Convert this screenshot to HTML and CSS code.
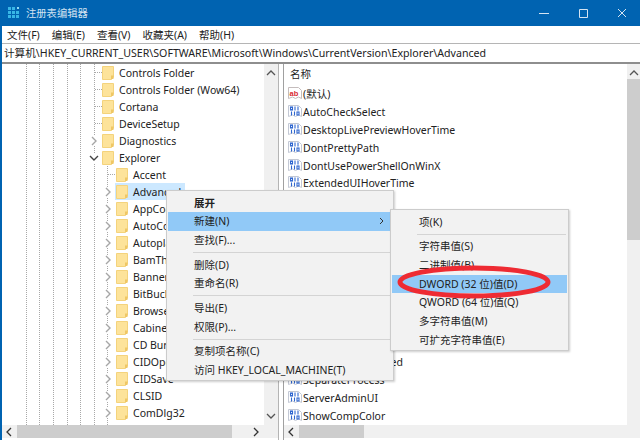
FILE: index.html
```html
<!DOCTYPE html>
<html lang="zh-CN">
<head>
    <meta charset="UTF-8">
    <title>注册表编辑器</title>
    <link rel="stylesheet" href="styles.css">
</head>
<body>
    <svg class="defs" width="0" height="0">
        <symbol id="folder" viewBox="0 0 12 14">
            <path d="M.5.5h11v10.5l-2 2.5h-9z" fill="#fde39a" stroke="#f4d37c"/>
            <path d="M9 9.500h2.500v3.500h-2.500z" fill="#efc765"/>
        </symbol>
        <symbol id="chev-r" viewBox="0 0 10 10"><path d="M3 1l4 4-4 4" fill="none" stroke="#a6a6a6" stroke-width="1.4"/></symbol>
        <symbol id="chev-d" viewBox="0 0 10 10"><path d="M1 3l4 4 4-4" fill="none" stroke="#444" stroke-width="1.4"/></symbol>
        <symbol id="reg-bin" viewBox="0 0 14 14">
            <path d="M.5.5h10l3 3v8l-3-1.500-3 1.500-3-1.500-4 1.500z" fill="#fff" stroke="#c3c8d4"/>
            <g fill="none" stroke="#2f66cf" stroke-width="1.100">
                <rect x="2.500" y="2" width="2" height="3"/><path d="M7 1.500v4"/><path d="M10 1.500v4"/>
                <path d="M3.500 6.500v4"/><path d="M6.500 6.500v4"/><rect x="9" y="7" width="2" height="3"/>
            </g>
        </symbol>
        <symbol id="reg-str" viewBox="0 0 14 14">
            <path d="M.5.5h10l3 3v8l-3-1.500-3 1.500-3-1.500-4 1.500z" fill="#fff" stroke="#c4bcbc"/>
            <text x="1.500" y="8.500" class="reg-ab">ab</text>
        </symbol>
    </svg>

    <header class="titlebar">
        <svg class="app-icon" viewBox="0 0 12 12" width="12" height="12">
            <g fill="#38b6e6">
                <rect x="0" y="0" width="3" height="3"/><rect x="4" y="0" width="3" height="3"/><rect x="9" y="0" width="2" height="2" fill="#8fdcf5"/>
                <rect x="0" y="4" width="3" height="3"/><rect x="4" y="4" width="3" height="3"/><rect x="8" y="4" width="3" height="3"/>
                <rect x="0" y="8" width="3" height="3"/><rect x="4" y="8" width="3" height="3"/><rect x="8" y="8" width="3" height="3"/>
            </g>
        </svg>
        <span class="title">注册表编辑器</span>
        <div class="win-buttons">
            <svg viewBox="0 0 10 10" width="10" height="10"><path d="M0 5.500h10" stroke="#d5e4f2"/></svg>
            <svg viewBox="0 0 10 10" width="10" height="10"><path d="M1.500 1.500h8v8h-8z" fill="none" stroke="#d5e4f2"/></svg>
            <svg viewBox="0 0 10 10" width="10" height="10"><path d="M1 1l8 8M9 1l-8 8" stroke="#d5e4f2"/></svg>
        </div>
    </header>

    <nav class="menubar">
        <span>文件(F)</span>
        <span>编辑(E)</span>
        <span>查看(V)</span>
        <span>收藏夹(A)</span>
        <span>帮助(H)</span>
    </nav>

    <div class="address">计算机\HKEY_CURRENT_USER\SOFTWARE\Microsoft\Windows\CurrentVersion\Explorer\Advanced</div>

    <main class="panes">
        <section class="tree-pane">
            <div class="tree-view">
                <ul class="tree">
                    <li class="lvl1 leaf"><svg class="folder"><use href="#folder"/></svg>Controls Folder</li>
                    <li class="lvl1 leaf"><svg class="folder"><use href="#folder"/></svg>Controls Folder (Wow64)</li>
                    <li class="lvl1 leaf"><svg class="folder"><use href="#folder"/></svg>Cortana</li>
                    <li class="lvl1 leaf"><svg class="folder"><use href="#folder"/></svg>DeviceSetup</li>
                    <li class="lvl1"><svg class="twist"><use href="#chev-r"/></svg><svg class="folder"><use href="#folder"/></svg>Diagnostics</li>
                    <li class="lvl1"><svg class="twist"><use href="#chev-d"/></svg><svg class="folder"><use href="#folder"/></svg>Explorer</li>
                    <li class="lvl2 leaf"><svg class="folder"><use href="#folder"/></svg>Accent</li>
                    <li class="lvl2"><svg class="twist"><use href="#chev-r"/></svg><span class="selected"><svg class="folder"><use href="#folder"/></svg>Advanced</span></li>
                    <li class="lvl2"><svg class="twist"><use href="#chev-r"/></svg><svg class="folder"><use href="#folder"/></svg>AppContainer</li>
                    <li class="lvl2"><svg class="twist"><use href="#chev-r"/></svg><svg class="folder"><use href="#folder"/></svg>AutoComplete</li>
                    <li class="lvl2"><svg class="twist"><use href="#chev-r"/></svg><svg class="folder"><use href="#folder"/></svg>Autoplay</li>
                    <li class="lvl2"><svg class="twist"><use href="#chev-r"/></svg><svg class="folder"><use href="#folder"/></svg>BamThrottling</li>
                    <li class="lvl2"><svg class="twist"><use href="#chev-r"/></svg><svg class="folder"><use href="#folder"/></svg>BannerStore</li>
                    <li class="lvl2"><svg class="twist"><use href="#chev-r"/></svg><svg class="folder"><use href="#folder"/></svg>BitBucket</li>
                    <li class="lvl2"><svg class="twist"><use href="#chev-r"/></svg><svg class="folder"><use href="#folder"/></svg>BrowseNewProcess</li>
                    <li class="lvl2"><svg class="twist"><use href="#chev-r"/></svg><svg class="folder"><use href="#folder"/></svg>CabinetState</li>
                    <li class="lvl2"><svg class="twist"><use href="#chev-r"/></svg><svg class="folder"><use href="#folder"/></svg>CD Burning</li>
                    <li class="lvl2"><svg class="twist"><use href="#chev-r"/></svg><svg class="folder"><use href="#folder"/></svg>CIDOpen</li>
                    <li class="lvl2"><svg class="twist"><use href="#chev-r"/></svg><svg class="folder"><use href="#folder"/></svg>CIDSave</li>
                    <li class="lvl2"><svg class="twist"><use href="#chev-r"/></svg><svg class="folder"><use href="#folder"/></svg>CLSID</li>
                    <li class="lvl2"><svg class="twist"><use href="#chev-r"/></svg><svg class="folder"><use href="#folder"/></svg>ComDlg32</li>
                </ul>
                <div class="vscroll">
                    <svg viewBox="0 0 10 6" width="10" height="6"><path d="M1 5l4-4 4 4" fill="none" stroke="#555" stroke-width="1.300"/></svg>
                    <svg viewBox="0 0 10 6" width="10" height="6"><path d="M1 1l4 4 4-4" fill="none" stroke="#555" stroke-width="1.300"/></svg>
                </div>
            </div>
            <div class="hscroll tree-hscroll">
                <svg viewBox="0 0 6 10" width="6" height="10"><path d="M5 1l-4 4 4 4" fill="none" stroke="#333" stroke-width="1.300"/></svg>
                <div class="hthumb"></div>
                <svg class="hnext" viewBox="0 0 6 10" width="6" height="10"><path d="M1 1l4 4-4 4" fill="none" stroke="#333" stroke-width="1.300"/></svg>
            </div>
        </section>

        <div class="splitter"></div>

        <section class="list-pane">
            <div class="list-view">
                <div class="list">
                    <div class="list-head">名称</div>
                    <div class="value"><svg class="reg"><use href="#reg-str"/></svg>(默认)</div>
                    <div class="value"><svg class="reg"><use href="#reg-bin"/></svg>AutoCheckSelect</div>
                    <div class="value"><svg class="reg"><use href="#reg-bin"/></svg>DesktopLivePreviewHoverTime</div>
                    <div class="value"><svg class="reg"><use href="#reg-bin"/></svg>DontPrettyPath</div>
                    <div class="value"><svg class="reg"><use href="#reg-bin"/></svg>DontUsePowerShellOnWinX</div>
                    <div class="value"><svg class="reg"><use href="#reg-bin"/></svg>ExtendedUIHoverTime</div>
                    <div class="value"><svg class="reg"><use href="#reg-bin"/></svg>Filter</div>
                    <div class="value"><svg class="reg"><use href="#reg-bin"/></svg>Hidden</div>
                    <div class="value"><svg class="reg"><use href="#reg-bin"/></svg>HideFileExt</div>
                    <div class="value"><svg class="reg"><use href="#reg-bin"/></svg>HideIcons</div>
                    <div class="value"><svg class="reg"><use href="#reg-bin"/></svg>IconsOnly</div>
                    <div class="value"><svg class="reg"><use href="#reg-bin"/></svg>ListviewAlphaSelect</div>
                    <div class="value"><svg class="reg"><use href="#reg-bin"/></svg>ListviewShadow</div>
                    <div class="value"><svg class="reg"><use href="#reg-bin"/></svg>MapNetDrvBtn</div>
                    <div class="value"><svg class="reg"><use href="#reg-bin"/></svg>ReindexedProfile</div>
                    <div class="value"><svg class="reg"><use href="#reg-bin"/></svg>RoamedTabletsSeed</div>
                    <div class="value"><svg class="reg"><use href="#reg-bin"/></svg>SeparateProcess</div>
                    <div class="value"><svg class="reg"><use href="#reg-bin"/></svg>ServerAdminUI</div>
                    <div class="value"><svg class="reg"><use href="#reg-bin"/></svg>ShowCompColor</div>
                </div>
                <div class="vscroll list-vscroll">
                    <svg viewBox="0 0 10 6" width="10" height="6"><path d="M1 5l4-4 4 4" fill="none" stroke="#555" stroke-width="1.300"/></svg>
                    <div class="vthumb"></div>
                </div>
            </div>
            <div class="hscroll list-hscroll">
                <svg viewBox="0 0 6 10" width="6" height="10"><path d="M5 1l-4 4 4 4" fill="none" stroke="#333" stroke-width="1.300"/></svg>
                <div class="hthumb"></div>
            </div>
        </section>
    </main>

    <div class="menu context-menu">
        <div class="item bold">展开</div>
        <div class="item active">新建(N)<svg class="arrow" viewBox="0 0 5 8" width="5" height="8"><path d="M1 1l3 3-3 3" fill="none" stroke="#333"/></svg></div>
        <div class="item">查找(F)...</div>
        <div class="sep"></div>
        <div class="item">删除(D)</div>
        <div class="item">重命名(R)</div>
        <div class="sep"></div>
        <div class="item">导出(E)</div>
        <div class="item">权限(P)...</div>
        <div class="sep"></div>
        <div class="item">复制项名称(C)</div>
        <div class="item">访问 HKEY_LOCAL_MACHINE(T)</div>
    </div>

    <div class="menu sub-menu">
        <div class="item">项(K)</div>
        <div class="sep"></div>
        <div class="item">字符串值(S)</div>
        <div class="item">二进制值(B)</div>
        <div class="item active">DWORD (32 位)值(D)</div>
        <div class="item">QWORD (64 位)值(Q)</div>
        <div class="item">多字符串值(M)</div>
        <div class="item">可扩充字符串值(E)</div>
    </div>

    <svg class="ring" viewBox="0 0 156 36" width="156" height="36">
        <ellipse cx="78" cy="18" rx="74" ry="14" fill="none" stroke="#ee2b33" stroke-width="5"/>
    </svg>
</body>
</html>
```

FILE: styles.css
```css
* {
    box-sizing: border-box;
}

html, body {
    margin: 0;
    padding: 0;
    width: 640px;
    height: 440px;
    overflow: hidden;
}

body {
    position: relative;
    display: flex;
    flex-direction: column;
    background-color: #ffffff;
    color: #222222;
    font-family: "Noto Sans", "Noto Sans CJK SC", sans-serif;
    font-size: 10.5px;
    border-left: 2px solid #0063b1;
}

.defs {
    position: absolute;
}

.reg-ab {
    font-family: "Liberation Sans", sans-serif;
    font-size: 7.5px;
    font-weight: bold;
    fill: #d8282f;
}

/* title bar */
.titlebar {
    height: 26px;
    margin-left: -2px;
    display: flex;
    align-items: center;
    padding-left: 8px;
    background-color: #0063b1;
    flex-shrink: 0;
}

.title {
    margin-left: 6px;
    color: #d3e2f0;
    font-size: 10.3px;
    line-height: 16px;
}

.win-buttons {
    margin-left: auto;
    display: flex;
    gap: 29px;
    padding-right: 13px;
}

.menubar {
    height: 17px;
    display: flex;
    align-items: center;
    gap: 12px;
    padding-left: 5px;
    flex-shrink: 0;
}

.address {
    height: 21px;
    line-height: 18px;
    padding-left: 2px;
    font-size: 10.63px;
    border-top: 1px solid #b5b5b5;
    border-bottom: 2px solid #8e8e8e;
    flex-shrink: 0;
    white-space: nowrap;
}

/* panes */
.panes {
    flex: 1;
    display: flex;
    min-height: 0;
}

.tree-pane {
    width: 276px;
    display: flex;
    flex-direction: column;
}

.tree-view, .list-view {
    flex: 1;
    display: flex;
    min-height: 0;
}

.tree {
    flex: 1;
    margin: 0;
    padding: 0;
    list-style: none;
    overflow: hidden;
    background-image:
        repeating-linear-gradient(to bottom, #a8a8a8 0 1px, transparent 1px 2px),
        repeating-linear-gradient(to bottom, #a8a8a8 0 1px, transparent 1px 2px),
        repeating-linear-gradient(to bottom, #a8a8a8 0 1px, transparent 1px 2px),
        repeating-linear-gradient(to bottom, #a8a8a8 0 1px, transparent 1px 2px),
        repeating-linear-gradient(to bottom, #a8a8a8 0 1px, transparent 1px 2px),
        repeating-linear-gradient(to bottom, #a8a8a8 0 1px, transparent 1px 2px),
        repeating-linear-gradient(to bottom, #a8a8a8 0 1px, transparent 1px 2px);
    background-size: 1px 100%;
    background-repeat: no-repeat;
    background-position: 24px 0, 37px 0, 51px 0, 65px 0, 78px 0, 92px 0, 105px 102px;
}

.tree li {
    height: 17px;
    display: flex;
    align-items: center;
    white-space: nowrap;
}

.lvl1 {
    padding-left: 87px;
}

.lvl2 {
    padding-left: 101px;
}

.twist {
    width: 10px;
    height: 10px;
    margin-right: 3px;
    background-color: #ffffff;
    flex-shrink: 0;
}

.tree .leaf {
    background-image: repeating-linear-gradient(to right, #a8a8a8 0 1px, transparent 1px 2px);
    background-size: 7px 1px;
    background-repeat: no-repeat;
}

.lvl1.leaf {
    padding-left: 100px;
    background-position: 93px 8px;
}

.lvl2.leaf {
    padding-left: 114px;
    background-position: 106px 8px;
}

.folder {
    width: 12px;
    height: 14px;
    margin-right: 5px;
    flex-shrink: 0;
}

.selected {
    display: flex;
    align-items: center;
    height: 17px;
    margin-left: -1px;
    padding: 0 4px 0 1px;
    background-color: #cce8ff;
}

.vscroll {
    width: 14px;
    display: flex;
    flex-direction: column;
    align-items: center;
    justify-content: space-between;
    padding: 6px 0;
    background-color: #f0f0f0;
    flex-shrink: 0;
}

.hscroll {
    height: 13px;
    display: flex;
    align-items: center;
    background-color: #f0f0f0;
    margin-bottom: 2px;
    flex-shrink: 0;
}

.hscroll svg {
    margin-left: 4px;
}

.hthumb {
    height: 13px;
    background-color: #cdcdcd;
}

.tree-hscroll .hthumb {
    margin-left: 5px;
    width: 215px;
}

.hscroll .hnext {
    margin-left: 21px;
}

.splitter {
    width: 6px;
    border-left: 1px solid #b4b4b4;
    border-right: 1px solid #a0a0a0;
    flex-shrink: 0;
}

.list-pane {
    flex: 1;
    display: flex;
    flex-direction: column;
    min-width: 0;
}

.list {
    flex: 1;
    overflow: hidden;
    padding-left: 4px;
}

.list-head {
    height: 21px;
    line-height: 21px;
    padding-left: 2px;
}

.value {
    height: 17.900px;
    display: flex;
    align-items: center;
    white-space: nowrap;
}

.reg {
    width: 14px;
    height: 14px;
    margin-right: 1px;
    flex-shrink: 0;
}

.list-vscroll {
    width: 13px;
    justify-content: flex-start;
    padding: 0;
}

.list-vscroll svg {
    margin: 6px 0 3px;
}

.vthumb {
    width: 13px;
    height: 161px;
    background-color: #cdcdcd;
}

.list-hscroll .hthumb {
    margin-left: 5px;
    width: 65px;
}

/* popup menus */
.menu {
    position: absolute;
    padding: 2.500px 1px;
    background-color: #f2f2f2;
    border: 1px solid #cccccc;
    box-shadow: 1px 1px 2px rgba(0, 0, 0, 0.2);
}

.context-menu {
    left: 164px;
    top: 190px;
    width: 228px;
    height: 191px;
}

.sub-menu {
    left: 388px;
    top: 209px;
    width: 179px;
    height: 142px;
}

.item {
    position: relative;
    height: 18.700px;
    line-height: 18.700px;
    padding-left: 26px;
    white-space: nowrap;
}

.sub-menu .item {
    padding-left: 27px;
}

.item.bold {
    font-weight: bold;
}

.item.active {
    background-color: #91c9f7;
}

.arrow {
    position: absolute;
    right: 8px;
    top: 5px;
}

.sep {
    height: 1px;
    margin: 2.500px 1px 2.500px 25px;
    background-color: #d4d4d4;
}

.ring {
    position: absolute;
    left: 394px;
    top: 264px;
}
```
